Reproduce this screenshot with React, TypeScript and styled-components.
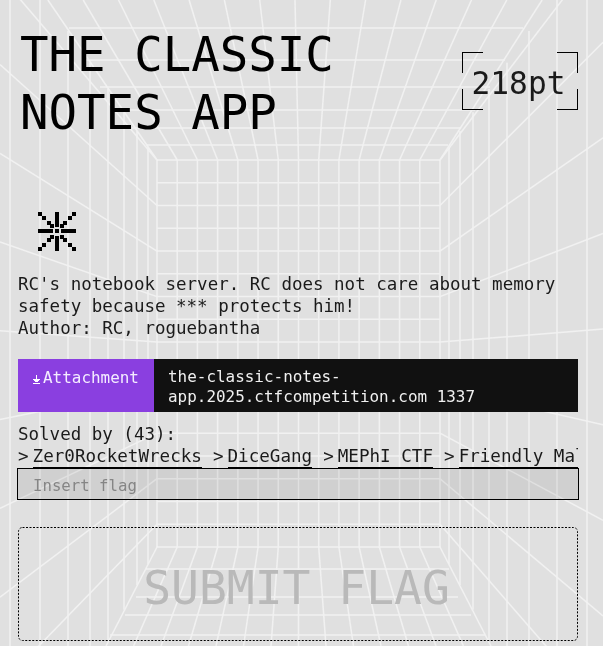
import styled, { createGlobalStyle } from 'styled-components';

const FONT = `"DejaVu Sans Mono", "Liberation Mono", monospace`;

const SOLVERS = ['Zer0RocketWrecks', 'DiceGang', 'MEPhI CTF', 'Friendly Maltese Citizens'];

// room drawn behind the page: back wall plus side walls, ceiling and floor
const LEFT = 157;
const RIGHT = 440;
const TOP = 160;
const BOTTOM = 547;
const MID_X = 298.5;
const MID_Y = 354;
const COLS = 14;
const ROWS = 17;
const COL_W = (RIGHT - LEFT) / COLS;
const ROW_H = (BOTTOM - TOP) / ROWS;

type Seg = [number, number, number, number];

function roomLines(): Seg[] {
  const out: Seg[] = [];
  // back wall
  for (let k = 0; k <= COLS; k++) {
    const x = LEFT + k * COL_W;
    out.push([x, TOP, x, BOTTOM]);
    out.push([x, TOP, 295 + (k - 7) * 35.3, 0]);
    out.push([x, BOTTOM, MID_X + (x - MID_X) * 1.36, 646]);
  }
  for (let k = 0; k <= ROWS; k += 1) {
    const y = TOP + k * ROW_H;
    out.push([LEFT, y, RIGHT, y]);
    if (k % 2 === 0) {
      out.push([LEFT, y, 0, MID_Y + (y - MID_Y) * 1.95]);
      out.push([RIGHT, y, 603, MID_Y + (y - MID_Y) * 2.1]);
    }
  }
  // ceiling rails
  for (const [y, l, r] of [
    [145, 146, 448],
    [128, 132, 461],
    [110, 119, 475],
    [87, 100, 490],
    [60, 85, 505],
    [28, 69, 523],
  ]) {
    out.push([l, y, r, y]);
  }
  // floor rails
  for (const [y, l, r] of [
    [569, 146, 449],
    [597, 136, 458],
    [615, 125, 471],
    [635, 110, 485],
  ]) {
    out.push([l, y, r, y]);
  }
  // side wall uprights
  for (const x of [10, 40, 68, 90, 108, 124, 137, 148]) {
    const d = LEFT - x;
    const up = Math.max(0, TOP - d * 1.45);
    const down = Math.min(646, BOTTOM + d * 1.9);
    out.push([x, up, x, down]);
    out.push([597 - x, up, 597 - x, down]);
  }
  return out;
}

const STAR_DIAG = [0, 4.3, 8.6, 12.4];

function Star() {
  return (
    <StarSvg viewBox="0 0 38 39" width="38" height="39" shapeRendering="crispEdges">
      <rect x="17" y="0" width="4" height="15" />
      <rect x="17" y="24" width="4" height="15" />
      <rect x="0" y="17" width="15" height="4" />
      <rect x="23" y="17" width="15" height="4" />
      {STAR_DIAG.map((d) => (
        <g key={d}>
          <rect x={d} y={d} width="4" height="4" />
          <rect x={34 - d} y={d} width="4" height="4" />
          <rect x={d} y={35 - d} width="4" height="4" />
          <rect x={34 - d} y={35 - d} width="4" height="4" />
        </g>
      ))}
      <rect x="17" y="17" width="4" height="4" />
    </StarSvg>
  );
}

function App() {
  return (
    <>
      <GlobalStyle />
      <Room viewBox="0 0 603 646" aria-hidden="true">
        {roomLines().map(([x1, y1, x2, y2], i) => (
          <line key={i} x1={x1} y1={y1} x2={x2} y2={y2} />
        ))}
      </Room>
      <Dither />
      <Page>
        <Header>
          <Title>
            THE CLASSIC
            <br />
            NOTES APP
          </Title>
          <Points>
            <Corner $v="top" $h="left" />
            <Corner $v="top" $h="right" />
            <Corner $v="bottom" $h="left" />
            <Corner $v="bottom" $h="right" />
            218pt
          </Points>
        </Header>
        <Star />
        <Description>
          RC's notebook server. RC does not care about memory safety because *** protects him!
          <br />
          Author: RC, roguebantha
        </Description>
        <AttachmentBar>
          <AttachmentLabel>
            <svg width="7" height="9" viewBox="0 0 7 9" shapeRendering="crispEdges">
              <path d="M3 0h1v4h3v1H6v1H5v1H2V6H1V5H0V4h3zM0 8h7v1H0z" fill="#fff" />
            </svg>
            Attachment
          </AttachmentLabel>
          <AttachmentHost>the-classic-notes-app.2025.ctfcompetition.com 1337</AttachmentHost>
        </AttachmentBar>
        <SolvedTitle>Solved by (43):</SolvedTitle>
        <SolverRow>
          {SOLVERS.map((name) => (
            <Solver key={name}>
              <Chevron>&gt;</Chevron>
              <SolverName>{name}</SolverName>
            </Solver>
          ))}
        </SolverRow>
        <FlagInput placeholder="Insert flag" />
        <SubmitButton type="button">
          <DashFrame width="560" height="114" aria-hidden="true">
            <rect x="0.5" y="0.5" width="559" height="113" rx="4" />
          </DashFrame>
          SUBMIT FLAG
        </SubmitButton>
      </Page>
    </>
  );
}

const GlobalStyle = createGlobalStyle`
  html, body {
    margin: 0;
    padding: 0;
    height: 100%;
    overflow: hidden;
    background: #e7e7e7;
  }
`;

const Room = styled.svg`
  position: fixed;
  top: 0;
  left: 0;
  width: 603px;
  height: 646px;

  line {
    stroke: #f8f8f8;
    stroke-width: 1.5;
  }
`;

const Dither = styled.div`
  position: fixed;
  inset: 0;
  background-image: radial-gradient(rgba(0, 0, 0, 0.03) 0.7px, transparent 0.8px);
  background-size: 2px 2px;
`;

const Page = styled.main`
  position: relative;
  width: 560px;
  height: 646px;
  padding: 0 25px 0 18px;
  font-family: ${FONT};
  font-size: 17.5px;
  color: #1a1a1a;
`;

const Header = styled.header`
  display: flex;
  justify-content: space-between;
  align-items: flex-start;
  height: 212px;
  padding: 26px 0 0 2px;
  box-sizing: border-box;
`;

const Title = styled.h1`
  margin: 0;
  font-size: 47.4px;
  font-weight: 400;
  line-height: 58px;
  color: #000;
`;

const Points = styled.div`
  position: relative;
  display: flex;
  align-items: center;
  justify-content: center;
  box-sizing: border-box;
  width: 116px;
  height: 58px;
  margin-top: 26px;
  padding: 4px 3px 0 0;
  font-size: 31.2px;
`;

const Corner = styled.span<{ $v: 'top' | 'bottom'; $h: 'left' | 'right' }>`
  position: absolute;
  width: 20px;
  height: 20px;
  ${(p) => p.$v}: 0;
  ${(p) => p.$h}: 0;
  border-${(p) => p.$v}: 1px solid #000;
  border-${(p) => p.$h}: 1px solid #000;
`;

const StarSvg = styled.svg`
  display: block;
  margin-left: 20px;
  fill: #000;
`;

const Description = styled.p`
  margin: 22px 0 0;
  line-height: 22px;
`;

const AttachmentBar = styled.div`
  display: flex;
  align-items: stretch;
  height: 53px;
  margin-top: 20px;
  font-size: 15.95px;
  line-height: 20px;
`;

const AttachmentLabel = styled.div`
  display: flex;
  align-items: flex-start;
  gap: 3px;
  flex: 0 0 136px;
  box-sizing: border-box;
  padding: 9px 0 0 15px;
  background: #8a3fe0;
  color: #f4ecff;

  svg {
    margin-top: 7px;
  }
`;

const AttachmentHost = styled.div`
  flex: 1;
  padding: 8px 14px;
  background: #111;
  color: #f0f0f0;
`;

const SolvedTitle = styled.div`
  margin-top: 11px;
  line-height: 22px;
`;

const SolverRow = styled.div`
  display: flex;
  gap: 11px;
  overflow: hidden;
  white-space: nowrap;
  height: 23px;
  font-size: 17.58px;
  line-height: 22px;
`;

const Solver = styled.div`
  display: flex;
  flex: none;
  gap: 4px;
`;

const Chevron = styled.span`
  color: #222;
`;

const SolverName = styled.span`
  border-bottom: 1px solid #000;
  height: 22px;
`;

const FlagInput = styled.input`
  display: block;
  box-sizing: border-box;
  width: 562px;
  height: 32px;
  margin: 0 0 0 -1px;
  padding: 3px 15px 0;
  border: 1px solid #000;
  border-radius: 0;
  outline: none;
  background: rgba(0, 0, 0, 0.07);
  font-family: ${FONT};
  font-size: 15.7px;

  &::placeholder {
    color: #858585;
    opacity: 1;
  }
`;

const SubmitButton = styled.button`
  position: relative;
  display: block;
  box-sizing: border-box;
  width: 560px;
  height: 114px;
  margin-top: 27px;
  padding: 8px 3px 0 0;
  border: none;
  background: transparent;
  color: #b9b9b9;
  font-family: ${FONT};
  font-size: 46.3px;
`;

const DashFrame = styled.svg`
  position: absolute;
  top: 0;
  left: 0;

  rect {
    fill: none;
    stroke: #000;
    stroke-width: 1;
    stroke-dasharray: 2 1.5;
  }
`;

export default App;
